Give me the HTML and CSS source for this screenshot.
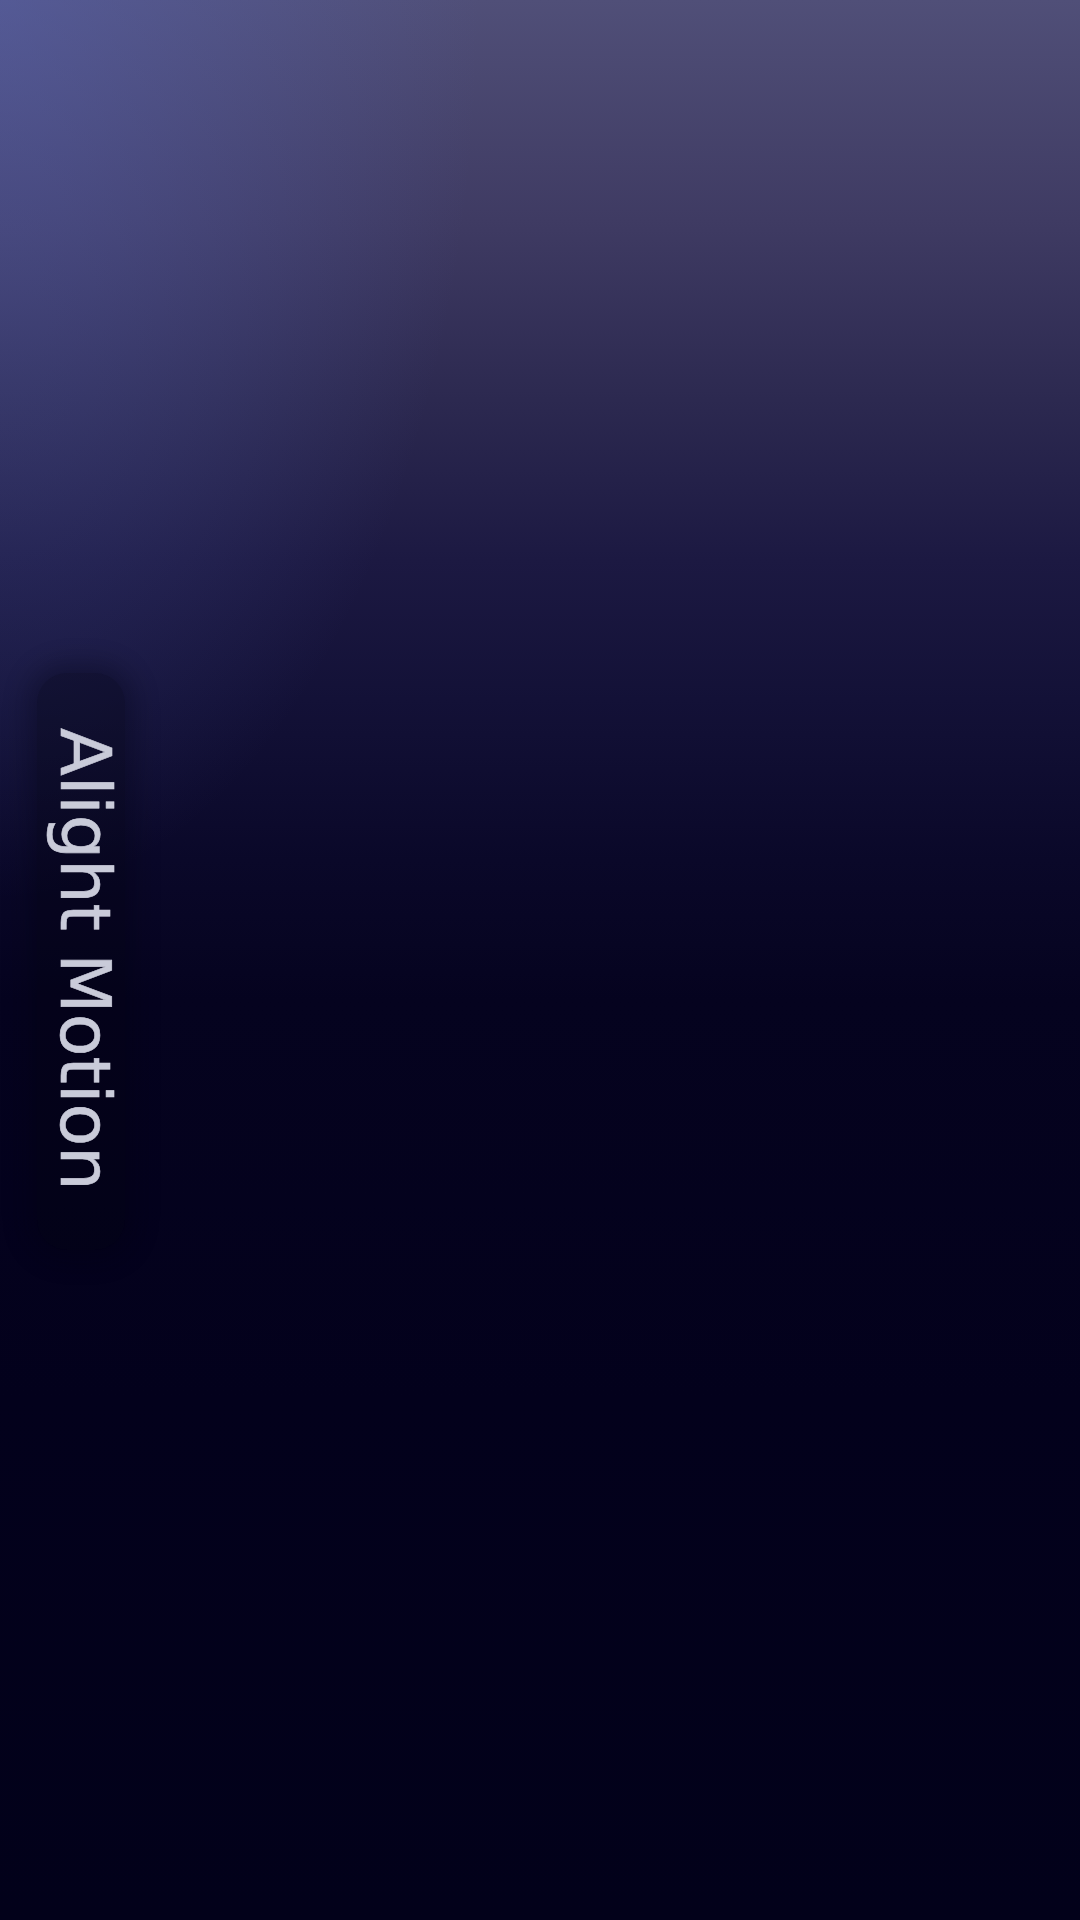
FILE: index.html
```html
<!DOCTYPE html>
<html lang="en">
<head>
    <meta charset="UTF-8">
    <meta name="viewport" content="width=device-width, initial-scale=1.0">
    <title>Alight Motion</title>
    <link rel="stylesheet" href="styles.css">
</head>
<body>
    <div class="screen">
        <div class="brand">
            <span class="brand-name">Alight Motion</span>
        </div>
    </div>
</body>
</html>
```

FILE: styles.css
```css
html, body {
    margin: 0;
    padding: 0;
}
body {
    width: 1080px;
    height: 1920px;
    overflow: hidden;
    background-color: #02011b;
    font-family: 'DejaVu Sans', 'Noto Sans', sans-serif;
}
.screen {
    height: 1920px;
    box-sizing: border-box;
    padding: 673px 0 0 37px;
    display: flex;
    align-items: flex-start;
    background:
        radial-gradient(ellipse 480px 900px at 0 0, rgba(90, 105, 190, 0.42), rgba(90, 105, 190, 0) 100%),
        linear-gradient(to bottom,
            #504f78 0px,
            #3f3b63 220px,
            #2c2950 400px,
            #1c1942 560px,
            #131137 700px,
            #0a0829 860px,
            #05031f 1000px,
            #03011c 1400px,
            #02011a 1920px);
}
.brand {
    display: flex;
    padding: 55px 0 59px 7px;
    border-radius: 30px;
    background-color: rgba(2, 2, 18, 0.35);
    box-shadow: 0 0 24px 10px rgba(2, 2, 18, 0.3);
}
.brand-name {
    writing-mode: vertical-rl;
    font-size: 70px;
    line-height: 1.164;
    color: #c9cbd9;
    -webkit-text-stroke: 0.6px #c9cbd9;
    white-space: nowrap;
}
```
